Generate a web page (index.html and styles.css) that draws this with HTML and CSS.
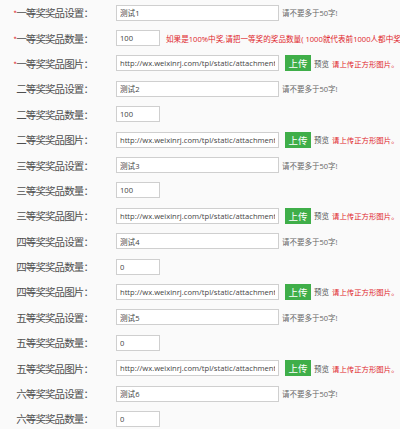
FILE: index.html
```html
<!DOCTYPE html>
<html lang="zh-CN">
<head>
  <meta charset="UTF-8">
  <title>奖品设置</title>
  <link rel="stylesheet" href="styles.css">
</head>
<body>
  <div class="form">
    <div class="row">
      <label class="label"><span class="req">*</span>一等奖奖品设置：</label>
      <input class="text" type="text" value="测试1">
      <span class="hint">请不要多于50字!</span>
    </div>
    <div class="row">
      <label class="label"><span class="req">*</span>一等奖奖品数量：</label>
      <input class="num" type="text" value="100">
      <span class="warn note">如果是100%中奖,请把一等奖的奖品数量( 1000就代表前1000人都中奖</span>
    </div>
    <div class="row">
      <label class="label"><span class="req">*</span>一等奖奖品图片：</label>
      <input class="text" type="text" value="http://wx.weixinrj.com/tpl/static/attachment/images/prize1.jpg">
      <button class="upload">上传</button>
      <span class="preview">预览</span>
      <span class="warn">请上传正方形图片。</span>
    </div>

    <div class="row">
      <label class="label">二等奖奖品设置：</label>
      <input class="text" type="text" value="测试2">
      <span class="hint">请不要多于50字!</span>
    </div>
    <div class="row">
      <label class="label">二等奖奖品数量：</label>
      <input class="num" type="text" value="100">
    </div>
    <div class="row">
      <label class="label">二等奖奖品图片：</label>
      <input class="text" type="text" value="http://wx.weixinrj.com/tpl/static/attachment/images/prize2.jpg">
      <button class="upload">上传</button>
      <span class="preview">预览</span>
      <span class="warn">请上传正方形图片。</span>
    </div>

    <div class="row">
      <label class="label">三等奖奖品设置：</label>
      <input class="text" type="text" value="测试3">
      <span class="hint">请不要多于50字!</span>
    </div>
    <div class="row">
      <label class="label">三等奖奖品数量：</label>
      <input class="num" type="text" value="100">
    </div>
    <div class="row">
      <label class="label">三等奖奖品图片：</label>
      <input class="text" type="text" value="http://wx.weixinrj.com/tpl/static/attachment/images/prize3.jpg">
      <button class="upload">上传</button>
      <span class="preview">预览</span>
      <span class="warn">请上传正方形图片。</span>
    </div>

    <div class="row">
      <label class="label">四等奖奖品设置：</label>
      <input class="text" type="text" value="测试4">
      <span class="hint">请不要多于50字!</span>
    </div>
    <div class="row">
      <label class="label">四等奖奖品数量：</label>
      <input class="num" type="text" value="0">
    </div>
    <div class="row">
      <label class="label">四等奖奖品图片：</label>
      <input class="text" type="text" value="http://wx.weixinrj.com/tpl/static/attachment/images/prize4.jpg">
      <button class="upload">上传</button>
      <span class="preview">预览</span>
      <span class="warn">请上传正方形图片。</span>
    </div>

    <div class="row">
      <label class="label">五等奖奖品设置：</label>
      <input class="text" type="text" value="测试5">
      <span class="hint">请不要多于50字!</span>
    </div>
    <div class="row">
      <label class="label">五等奖奖品数量：</label>
      <input class="num" type="text" value="0">
    </div>
    <div class="row">
      <label class="label">五等奖奖品图片：</label>
      <input class="text" type="text" value="http://wx.weixinrj.com/tpl/static/attachment/images/prize5.jpg">
      <button class="upload">上传</button>
      <span class="preview">预览</span>
      <span class="warn">请上传正方形图片。</span>
    </div>

    <div class="row">
      <label class="label">六等奖奖品设置：</label>
      <input class="text" type="text" value="测试6">
      <span class="hint">请不要多于50字!</span>
    </div>
    <div class="row">
      <label class="label">六等奖奖品数量：</label>
      <input class="num" type="text" value="0">
    </div>
  </div>
</body>
</html>
```

FILE: styles.css
```css
html, body {
  margin: 0;
  padding: 0;
  background: #fafafa;
  overflow: hidden;
}
.form {
  font-family: "Open Sans", "Noto Sans CJK SC", sans-serif;
  color: #555;
}
.row {
  display: flex;
  align-items: center;
  height: 25.4px;
  white-space: nowrap;
  overflow: hidden;
}
.label {
  width: 93px;
  margin-right: 23px;
  flex-shrink: 0;
  text-align: right;
  font-family: "Noto Sans CJK SC", sans-serif;
  font-size: 10.5px;
  letter-spacing: -0.9px;
  color: #4f4f4f;
}
.req {
  color: #e0252b;
  font-size: 8px;
  margin-right: 0;
}
.text, .num {
  box-sizing: border-box;
  height: 16px;
  padding: 0 3px;
  border: 1px solid #cfcfcf;
  background: #fff;
  font-family: "Open Sans", "Noto Sans CJK SC", sans-serif;
  font-size: 7.6px;
  color: #444;
  outline: none;
  flex-shrink: 0;
}
.text { width: 163px; }
.num { width: 44px; }
.hint {
  margin-left: 3px;
  font-size: 7.5px;
  color: #666;
}
.warn {
  font-size: 7.4px;
  color: #e0252b;
}
.note {
  margin-left: 6px;
  font-size: 7.6px;
}
.upload {
  margin-left: 6px;
  width: 26px;
  height: 16px;
  padding: 0;
  border: none;
  background: #3fae49;
  color: #fff;
  font-family: "Noto Sans CJK SC", sans-serif;
  font-size: 9.5px;
  flex-shrink: 0;
}
.preview {
  margin: 0 3px 0 3px;
  font-size: 7.5px;
  color: #555;
}
```
